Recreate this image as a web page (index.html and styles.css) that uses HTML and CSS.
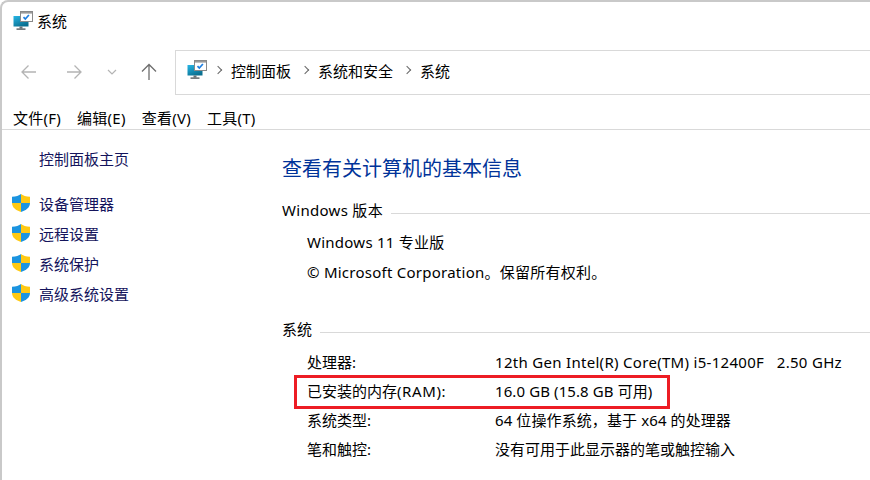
FILE: index.html
```html
<!DOCTYPE html>
<html lang="zh-CN">
<head>
  <meta charset="UTF-8">
  <title>系统</title>
  <link rel="stylesheet" href="styles.css">
</head>
<body>
<svg class="defs" width="0" height="0">
  <defs>
    <linearGradient id="screen" x1="0" y1="0" x2="0.6" y2="1">
      <stop offset="0" stop-color="#27b6e6"/>
      <stop offset="1" stop-color="#0a6f8f"/>
    </linearGradient>
    <symbol id="pc" viewBox="0 0 20 20">
      <rect x="0.500" y="5" width="15" height="10.500" fill="url(#screen)"/>
      <rect x="6.500" y="15.500" width="3" height="2" fill="#6b7478"/>
      <rect x="3.500" y="17.500" width="9" height="1.200" fill="#3c4346"/>
      <rect x="7.500" y="0.500" width="12" height="10" fill="#fff" stroke="#8a8a8a"/>
      <rect x="8" y="1" width="11" height="1.600" fill="#9a9a9a"/>
      <path d="M10.500 6.200l1.800 1.800 3.600-4" fill="none" stroke="#1e7fe0" stroke-width="1.700"/>
    </symbol>
    <symbol id="shield" viewBox="0 0 18 18">
      <path d="M9 0C7 1.600 4 2.600 0 2.700V9h9z" fill="#1b94e0"/>
      <path d="M9 0c2 1.600 5 2.600 9 2.700V9H9z" fill="#ffc914"/>
      <path d="M0 9h9v9C4 16.400 0 13.500 0 9z" fill="#ffc914"/>
      <path d="M18 9H9v9c5-1.600 9-4.500 9-9z" fill="#1b94e0"/>
    </symbol>
  </defs>
</svg>
<div class="window">
  <div class="titlebar">
    <svg class="pc-icon"><use href="#pc"/></svg>
    <span>系统</span>
  </div>

  <div class="navbar">
    <div class="nav-btns">
      <svg class="nav-back" width="18" height="16" viewBox="0 0 18 16"><path d="M16 8H2M8.500 1.500L2 8l6.500 6.500" fill="none" stroke="#b4b4b4" stroke-width="1.300"/></svg>
      <svg class="nav-forward" width="18" height="16" viewBox="0 0 18 16"><path d="M2 8h14M9.500 1.500L16 8l-6.500 6.500" fill="none" stroke="#b4b4b4" stroke-width="1.300"/></svg>
      <svg class="nav-down" width="10" height="6" viewBox="0 0 10 6"><path d="M1 1l4 4 4-4" fill="none" stroke="#b4b4b4" stroke-width="1.200"/></svg>
      <svg class="nav-up" width="18" height="18" viewBox="0 0 18 18"><path d="M9 17V2M2 8.500L9 1.500l7 7" fill="none" stroke="#6e6e6e" stroke-width="1.300"/></svg>
    </div>
    <div class="address">
      <svg class="pc-icon"><use href="#pc"/></svg>
      <span class="crumb-sep"></span>
      <span>控制面板</span>
      <span class="crumb-sep"></span>
      <span>系统和安全</span>
      <span class="crumb-sep"></span>
      <span>系统</span>
    </div>
  </div>

  <div class="menubar">
    <span>文件(F)</span>
    <span>编辑(E)</span>
    <span>查看(V)</span>
    <span>工具(T)</span>
  </div>

  <div class="content">
    <div class="sidebar">
      <a class="home-link">控制面板主页</a>
      <ul>
        <li><svg class="shield"><use href="#shield"/></svg>设备管理器</li>
        <li><svg class="shield"><use href="#shield"/></svg>远程设置</li>
        <li><svg class="shield"><use href="#shield"/></svg>系统保护</li>
        <li><svg class="shield"><use href="#shield"/></svg>高级系统设置</li>
      </ul>
    </div>

    <div class="main">
      <h1>查看有关计算机的基本信息</h1>

      <div class="section-title"><span class="wide">Windows 版本</span></div>
      <div class="edition">
        <p>Windows 11 专业版</p>
        <p>© Microsoft Corporation。保留所有权利。</p>
      </div>

      <div class="section-title system-title"><span>系统</span></div>
      <div class="specs">
        <div class="row"><span class="label">处理器:</span><span class="wide">12th Gen Intel(R) Core(TM) i5-12400F&nbsp;&nbsp; 2.50 GHz</span></div>
        <div class="row highlighted"><span class="label">已安装的内存<span class="wide-latin">(RAM):</span></span><span class="slight">16.0 GB (15.8 GB 可用)</span></div>
        <div class="row"><span class="label">系统类型:</span><span class="slight">64 位操作系统，基于 x64 的处理器</span></div>
        <div class="row"><span class="label">笔和触控:</span><span>没有可用于此显示器的笔或触控输入</span></div>
      </div>
    </div>
  </div>
</div>
</body>
</html>
```

FILE: styles.css
```css
* {
  margin: 0;
  padding: 0;
  box-sizing: border-box;
}
html, body {
  width: 870px;
  height: 480px;
  overflow: hidden;
  background: #fff;
}
body {
  font-family: "Noto Sans", "Noto Sans CJK SC", sans-serif;
  font-size: 15px;
  color: #000;
}
.defs {
  position: absolute;
}
.window {
  height: 480px;
  border-top: 2px solid #c9c9c9;
  border-left: 2px solid #c9c9c9;
  border-top-left-radius: 8px;
}
.pc-icon {
  width: 20px;
  height: 20px;
  flex: none;
}

/* 标题栏 */
.titlebar {
  display: flex;
  align-items: center;
  gap: 4px;
  height: 36px;
  padding: 1px 0 0 11px;
}

/* 导航 */
.navbar {
  display: flex;
  margin-top: 12px;
  height: 45px;
}
.nav-btns {
  display: flex;
  align-items: center;
  width: 173px;
  padding: 0 0 2px 18px;
}
.nav-forward {
  margin-left: 27px;
}
.nav-down {
  margin-left: 24px;
}
.nav-up {
  margin-left: 23px;
}
.address {
  flex: 1;
  display: flex;
  align-items: center;
  gap: 8px;
  padding: 0 0 5px 11px;
  border: 1px solid #d9d9d9;
  border-right: 0;
}
.address .pc-icon {
  margin-right: -3px;
}
.crumb-sep {
  width: 6px;
  height: 6px;
  border-top: 1.500px solid #666;
  border-right: 1.500px solid #666;
  transform: rotate(45deg);
  margin: 0 2.500px;
}

/* 菜单 */
.menubar {
  display: flex;
  gap: 16px;
  height: 35px;
  padding: 12px 0 0 11px;
  border-bottom: 1px solid #d9d9d9;
  line-height: 22px;
  letter-spacing: 0.250px;
}

/* 内容 */
.content {
  display: flex;
}
.sidebar {
  width: 280px;
  padding: 18px 0 0 10px;
  color: #14145c;
}
.home-link {
  display: block;
  padding-left: 27px;
  line-height: 22px;
}
.sidebar ul {
  list-style: none;
  margin-top: 18px;
}
.sidebar li {
  display: flex;
  align-items: center;
  gap: 9px;
  height: 30px;
}
.shield {
  width: 18px;
  height: 18px;
  flex: none;
}
.main {
  flex: 1;
}
h1 {
  margin-top: 25px;
  font-size: 20px;
  font-weight: 400;
  line-height: 28px;
  color: #003399;
}
.section-title {
  display: flex;
  align-items: center;
  gap: 8px;
  margin-top: 16px;
  line-height: 22px;
}
.section-title::after {
  content: "";
  flex: 1;
  height: 1px;
  background: #d9d9d9;
  margin-top: 6px;
}
.edition {
  padding: 6px 0 0 25px;
  letter-spacing: 0.250px;
}
.edition p {
  height: 30px;
  line-height: 30px;
}
.system-title {
  margin-top: 31px;
}
.specs {
  margin-top: 7.600px;
  padding-left: 25px;
}
.row {
  display: flex;
  position: relative;
  height: 29.200px;
  line-height: 29.200px;
}
.label {
  width: 188px;
}
.wide {
  letter-spacing: 0.300px;
}
.wide-latin {
  letter-spacing: 0.600px;
}
.slight {
  letter-spacing: 0.100px;
}
.highlighted::after {
  content: "";
  position: absolute;
  left: -13px;
  top: -2px;
  width: 370px;
  height: 28px;
  border: 3px solid #ed1c24;
}
```
